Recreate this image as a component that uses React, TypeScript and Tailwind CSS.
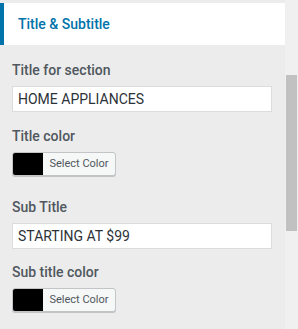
const font = { fontFamily: 'Roboto, "Liberation Sans", sans-serif' };

function Label({ children }: { children: React.ReactNode }) {
  return <div className="text-[14px] leading-5 font-medium text-[#50575e]">{children}</div>;
}

function TextField({ value }: { value: string }) {
  return (
    <input
      type="text"
      defaultValue={value}
      className="mt-[6px] block w-[260px] h-[26px] px-[5px] bg-white border border-[#dcdcde] text-[14px] text-[#2c3338] outline-none"
    />
  );
}

function ColorButton() {
  return (
    <button className="mt-[6px] flex h-[24px] w-[104px] items-stretch overflow-hidden rounded-[3px] border border-[#c3c4c7] bg-[#f6f7f7] shadow-[0_1px_0_#c3c4c7]">
      <span className="w-[30px] bg-black" />
      <span className="flex flex-1 items-center justify-center text-[11px] text-[#50575e]">Select Color</span>
    </button>
  );
}

export default function App() {
  return (
    <div className="flex w-[298px] h-[329px] overflow-hidden bg-[#ececec]" style={font}>
      <div className="w-[285px] pt-[3px]">
        <div className="flex h-[42px] items-center border-l-4 border-[#0073aa] bg-white pl-[14px]">
          <span className="text-[14px] font-medium text-[#0073aa]">Title &amp; Subtitle</span>
        </div>

        <div className="px-3 pt-[15px]">
          <Label>Title for section</Label>
          <TextField value="HOME APPLIANCES" />

          <div className="mt-[14px]">
            <Label>Title color</Label>
            <ColorButton />
          </div>

          <div className="mt-[21px]">
            <Label>Sub Title</Label>
            <TextField value="STARTING AT $99" />
          </div>

          <div className="mt-[13px]">
            <Label>Sub title color</Label>
            <ColorButton />
          </div>
        </div>
      </div>

      {/* scrollbar */}
      <div className="flex-1 bg-[#f0f0f0] pt-[75px] pl-px">
        <div className="h-[156px] w-[11px] bg-[#c1c1c1]" />
      </div>
    </div>
  );
}
